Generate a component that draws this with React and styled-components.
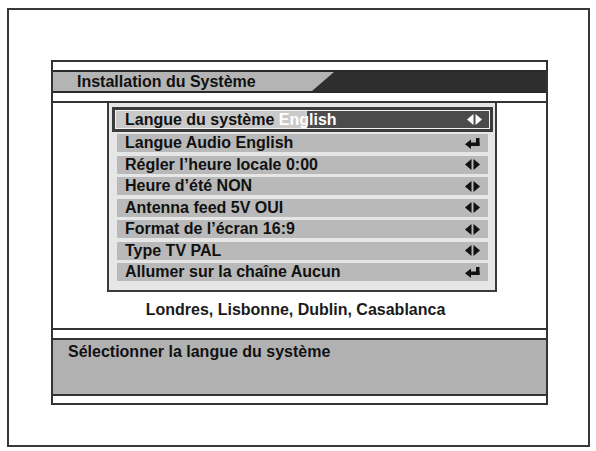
import React from 'react';
import styled, { createGlobalStyle } from 'styled-components';

const GlobalStyle = createGlobalStyle`
  * { box-sizing: border-box; }
  body {
    margin: 0;
    background: #ffffff;
    font-family: "Liberation Sans", Arial, sans-serif;
  }
`;

const Screen = styled.div`
  margin: 8px 0 0 7px;
  width: 583px;
  height: 439px;
  border: 2px solid #383838;
  padding: 50px 0 0 42px;
`;

const Panel = styled.div`
  width: 497px;
  border: 2px solid #333;
  display: flex;
  flex-direction: column;
`;

const Strip = styled.div`
  height: ${(p) => p.h}px;
  background: #fff;
`;

const Header = styled.div`
  position: relative;
  height: 23px;
  border-top: 2px solid #2a2a2a;
  border-bottom: 2px solid #2a2a2a;
  background: #2e2e2e;
`;

const TitleTab = styled.div`
  height: 100%;
  background: #b4b4b4;
  clip-path: polygon(0 0, 281px 0, 259px 100%, 0 100%);
  padding-left: 24px;
  display: flex;
  align-items: center;
  font-size: 16px;
  font-weight: bold;
  color: #111;
`;

const Content = styled.div`
  border-top: 2px solid #333;
  border-bottom: 2px solid #333;
  height: 229px;
  background: #fff;
  display: flex;
  flex-direction: column;
`;

const MenuBox = styled.div`
  margin-left: 54px;
  width: 390px;
  height: 189px;
  border: 2px solid #3a3a3a;
  border-top: none;
  background: #e6e6e6;
  padding: 4px 0 0;
  display: flex;
  flex-direction: column;
`;

const Row = styled.div`
  display: flex;
  align-items: center;
  justify-content: space-between;
  height: 18px;
  margin: 0 7px 3.5px 8px;
  padding: 0 8px 0 8px;
  background: #b9b9b9;
  font-size: 16px;
  font-weight: bold;
  color: #111;
  white-space: nowrap;
`;

const SelectedRow = styled(Row)`
  height: 25px;
  margin: 0 2px 2px 3px;
  padding: 0 8px 0 10px;
  border: 3px solid #3b3b3b;
  box-shadow: inset 0 0 0 1px #f2f2f2;
  background: linear-gradient(to right, #cacaca 0, #cacaca 192px, #4b4b4b 192px);
`;

const Value = styled.span`
  color: ${(p) => (p.light ? '#ffffff' : 'inherit')};
`;

const Icon = styled.svg`
  width: 15px;
  height: 11px;
  flex: none;
  fill: ${(p) => (p.light ? '#ffffff' : '#111')};
`;

const City = styled.div`
  flex: 1;
  display: flex;
  align-items: center;
  justify-content: center;
  padding-right: 8px;
  font-size: 16px;
  font-weight: bold;
  color: #1a1a1a;
`;

const Footer = styled.div`
  height: 58px;
  border-top: 2px solid #333;
  border-bottom: 2px solid #333;
  background: #b1b1b1;
  padding: 2px 0 0 15px;
  font-size: 16px;
  font-weight: bold;
  color: #111;
  line-height: 20px;
`;

const Arrows = ({ light }) => (
  <Icon light={light} viewBox="0 0 15 11">
    <polygon points="0,5.5 6.5,0 6.5,11" />
    <polygon points="8.5,0 15,5.5 8.5,11" />
  </Icon>
);

const Enter = ({ light }) => (
  <Icon light={light} viewBox="0 0 15 11">
    <rect x="11" y="0" width="3.5" height="8" />
    <rect x="5" y="4.5" width="9.5" height="3.5" />
    <polygon points="0,6.25 6,1.5 6,11" />
  </Icon>
);

const items = [
  { label: 'Langue Audio', value: 'English', icon: 'enter' },
  { label: 'Régler l’heure locale', value: '0:00', icon: 'arrows' },
  { label: 'Heure d’été', value: 'NON', icon: 'arrows' },
  { label: 'Antenna feed 5V', value: 'OUI', icon: 'arrows' },
  { label: 'Format de l’écran', value: '16:9', icon: 'arrows' },
  { label: 'Type TV', value: 'PAL', icon: 'arrows' },
  { label: 'Allumer sur la chaîne', value: 'Aucun', icon: 'enter' },
];

export default function App() {
  return (
    <>
      <GlobalStyle />
      <Screen>
        <Panel>
          <Strip h={8} />
          <Header>
            <TitleTab>Installation du Système</TitleTab>
          </Header>
          <Strip h={8} />
          <Content>
            <MenuBox>
              <SelectedRow>
                <span>
                  Langue du système <Value light>English</Value>
                </span>
                <Arrows light />
              </SelectedRow>
              {items.map((it) => (
                <Row key={it.label}>
                  <span>
                    {it.label} <Value>{it.value}</Value>
                  </span>
                  {it.icon === 'enter' ? <Enter /> : <Arrows />}
                </Row>
              ))}
            </MenuBox>
            <City>Londres, Lisbonne, Dublin, Casablanca</City>
          </Content>
          <Strip h={8} />
          <Footer>Sélectionner la langue du système</Footer>
          <Strip h={7} />
        </Panel>
      </Screen>
    </>
  );
}
